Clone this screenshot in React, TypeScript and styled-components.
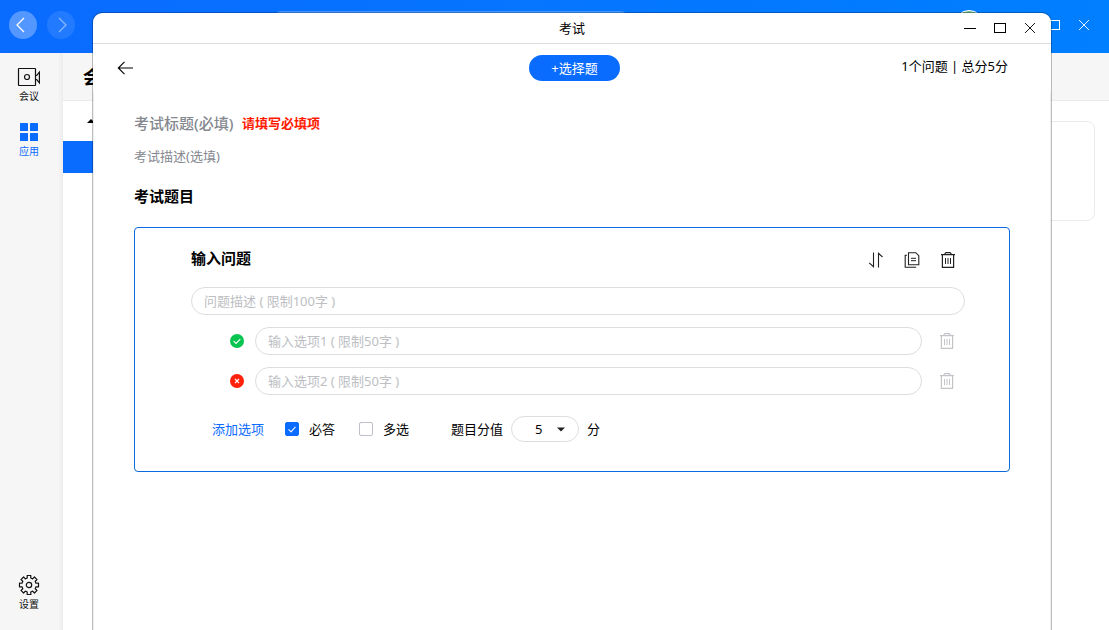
import React, { useState } from 'react';
import styled, { createGlobalStyle } from 'styled-components';

const GlobalStyle = createGlobalStyle`
  *, *::before, *::after { box-sizing: border-box; }
  body {
    margin: 0;
    font: 13px/20px "Noto Sans", "Noto Sans CJK SC", sans-serif;
    color: #000;
    background: #fff;
  }
  button, input, select { font: inherit; color: inherit; margin: 0; }
  button { border: 0; padding: 0; background: none; cursor: pointer; }
  svg { display: block; }
`;

/* ---------- application behind the window ---------- */

const Desktop = styled.div`
  position: relative;
  display: flex;
  flex-direction: column;
  min-height: 100vh;
  overflow: hidden;
`;

const AppBar = styled.header`
  display: flex;
  align-items: center;
  gap: 10px;
  height: 53px;
  padding: 0 15px 3px 9px;
  background: linear-gradient(90deg, #0a6bff, #007fff);
`;

const RoundButton = styled.button<{ $dim?: boolean }>`
  display: grid;
  place-items: center;
  width: 28px;
  height: 28px;
  border-radius: 50%;
  color: #fff;
  background: rgba(255, 255, 255, ${p => (p.$dim ? 0.1 : 0.3)});
  svg { opacity: ${p => (p.$dim ? 0.45 : 1)}; }
`;

const SearchBar = styled.div`
  width: 352px;
  height: 28px;
  margin-left: 190px;
  border-radius: 6px;
  background: rgba(255, 255, 255, 0.25);
`;

const Avatar = styled.div`
  width: 30px;
  height: 30px;
  margin: 0 50px 0 auto;
  border: 1px solid #fff;
  border-radius: 50%;
  background: #68b48c;
`;

const BarButton = styled.button`
  display: grid;
  place-items: center;
  width: 20px;
  height: 28px;
  color: #fff;
`;

const AppBody = styled.div`
  flex: 1;
  display: flex;
`;

const SideBar = styled.nav`
  display: flex;
  flex-direction: column;
  align-items: center;
  gap: 17px;
  width: 63px;
  padding: 13px 5px 18px 0;
  background: linear-gradient(90deg, #f6f6f6 58px, #ececec 63px);
`;

const SideItem = styled.button<{ $active?: boolean; $last?: boolean }>`
  display: flex;
  flex-direction: column;
  align-items: center;
  gap: 1px;
  margin-top: ${p => (p.$last ? 'auto' : '0')};
  font-size: 10px;
  line-height: 15px;
  color: ${p => (p.$active ? '#0a6bff' : '#111')};
`;

const Page = styled.div`
  flex: 1;
  display: flex;
  flex-direction: column;
`;

const PageHead = styled.h1`
  margin: 0;
  height: 48px;
  padding-left: 20px;
  border-bottom: 1px solid #ebebeb;
  background: #f6f6f6;
  font-size: 18px;
  line-height: 48px;
`;

const PageColumns = styled.div`
  flex: 1;
  display: flex;
`;

const Tree = styled.div`
  width: 180px;
`;

const TreeHead = styled.div`
  display: flex;
  align-items: center;
  height: 40px;
  padding-left: 24px;
`;

const TreeSelected = styled.div`
  height: 32px;
  background: #0a6bff;
`;

const PagePanel = styled.div`
  flex: 1;
  height: 100px;
  margin: 20px 14px 0 0;
  border: 1px solid #ebebeb;
  border-radius: 8px;
`;

/* ---------- exam window ---------- */

const Window = styled.section`
  position: absolute;
  inset: 12px 57px 0 92px;
  display: flex;
  flex-direction: column;
  border: 1px solid rgba(0, 0, 0, 0.25);
  border-bottom: 0;
  border-radius: 10px 10px 0 0;
  background: #fff;
  background-clip: padding-box;
  overflow: hidden;
`;

const TitleBar = styled.header`
  display: grid;
  grid-template-columns: 1fr auto 1fr;
  align-items: center;
  height: 31px;
  padding: 0 6px;
  border-bottom: 1px solid #dedede;
`;

const WindowTitle = styled.span`
  grid-column: 2;
`;

const WindowButtons = styled.div`
  display: flex;
  justify-content: flex-end;
`;

const WindowButton = styled.button`
  display: grid;
  place-items: center;
  width: 30px;
  height: 30px;
`;

const ToolBar = styled.div`
  display: grid;
  grid-template-columns: 1fr auto 1fr;
  align-items: center;
  height: 48px;
  padding: 0 19px 0 24px;
`;

const BackButton = styled.button`
  justify-self: start;
`;

const AddButton = styled.button`
  height: 26px;
  padding: 0 22px 1px;
  border-radius: 13px;
  color: #fff;
  background: #0a6bff;
`;

const Summary = styled.span`
  justify-self: end;
  padding: 0 24px 4px 0;
`;

const Form = styled.form`
  flex: 1;
  padding: 20px 40px;
  border: solid #ededed;
  border-width: 0 1px;
`;

const TitleRow = styled.div`
  display: flex;
  align-items: center;
  height: 22px;
  margin-bottom: 12px;
`;

const PlainInput = styled.input<{ $kind: 'title' | 'text' | 'question' }>`
  width: ${p => (p.$kind === 'title' ? '108px' : '300px')};
  height: ${p => (p.$kind === 'text' ? '20px' : '22px')};
  padding: 0;
  border: 0;
  outline: 0;
  display: block;
  background: none;
  font-size: ${p => (p.$kind === 'text' ? '13px' : '15px')};
  font-weight: ${p => ({ title: 500, text: 400, question: 700 })[p.$kind]};
  &::placeholder {
    opacity: 1;
    color: ${p => (p.$kind === 'question' ? '#000' : '#85888f')};
  }
`;

const ErrorText = styled.span`
  font-weight: 700;
  color: #ff1a00;
`;

const SectionTitle = styled.h2`
  margin: 19px 0 20px;
  font-size: 15px;
  line-height: 22px;
`;

const Card = styled.div`
  display: flex;
  flex-direction: column;
  gap: 12px;
  padding: 16px 44px 29px 56px;
  border: 1px solid #0a6bdf;
  border-radius: 4px;
`;

const CardHead = styled.div`
  display: flex;
  align-items: flex-start;
  justify-content: space-between;
  height: 31px;
  padding: 3px 9px 0 0;
`;

const IconRow = styled.div`
  display: flex;
  gap: 20px;
  padding-top: 5px;
`;

const IconButton = styled.button<{ $faint?: boolean }>`
  width: 16px;
  height: 16px;
  color: ${p => (p.$faint ? '#c4c4c8' : '#222')};
`;

const PillInput = styled.input`
  flex: 1;
  width: 100%;
  min-width: 0;
  min-height: 28px;
  padding: 0 12px;
  border: 1px solid #dcdddf;
  border-radius: 14px;
  outline: 0;
  &::placeholder { color: #bcbec2; opacity: 1; }
`;

const OptionRow = styled.div`
  display: flex;
  align-items: center;
  padding: 0 10px 0 39px;
`;

const Mark = styled.button`
  width: 14px;
  height: 14px;
  margin-right: 11px;
`;

const OptionRemove = styled(IconButton)`
  margin-left: 17px;
`;

const CardFoot = styled.div`
  display: flex;
  align-items: center;
  margin-top: 9px;
  padding-left: 21px;
`;

const AddOption = styled.a`
  margin-right: 21px;
  color: #0a6bff;
  text-decoration: none;
`;

const CheckLabel = styled.label`
  display: flex;
  align-items: center;
  gap: 10px;
  margin-right: 24px;
`;

const CheckBox = styled.input.attrs({ type: 'checkbox' })`
  appearance: none;
  display: grid;
  place-items: center;
  width: 14px;
  height: 14px;
  border: 1px solid #bfc0c8;
  border-radius: 2px;
  &:checked { border-color: #0a6bff; background: #0a6bff; }
  &:checked::before {
    content: "";
    width: 4px;
    height: 7px;
    margin-bottom: 2px;
    border: solid #fff;
    border-width: 0 1px 1px 0;
    transform: rotate(42deg);
  }
`;

const ScoreLabel = styled.label`
  margin: 0 8px 0 18px;
`;

const SelectBox = styled.span`
  position: relative;
  margin-right: 8px;
  svg {
    position: absolute;
    top: 11px;
    right: 14px;
    pointer-events: none;
  }
`;

const Select = styled.select`
  appearance: none;
  display: block;
  width: 68px;
  height: 26px;
  padding: 0 22px 0 23px;
  border: 1px solid #dcdddf;
  border-radius: 13px;
  background: #fff;
`;

/* ---------- icons ---------- */

const line = { fill: 'none', stroke: 'currentColor' } as const;

const Chevron = ({ flip }: { flip?: boolean }) => (
  <svg width="16" height="16" viewBox="0 0 16 16" {...line} strokeWidth="1.3">
    <path d={flip ? 'M6 1l7 7-7 7' : 'M9 1L2 8l7 7'} />
  </svg>
);

const VideoIcon = () => (
  <svg width="24" height="22" viewBox="0 0 24 22" {...line} strokeWidth="1.2">
    <rect x="1.5" y="2.5" width="17" height="17" rx="0.5" />
    <circle cx="10" cy="11" r="2.5" />
    <path d="M18.5 9.5h1.2L22.4 6.2v10.6l-2.7-3.3h-1.2" />
  </svg>
);

const AppsIcon = () => (
  <svg width="22" height="22" viewBox="0 0 22 22" fill="currentColor">
    <rect x="2" y="2" width="8" height="8" rx="0.6" />
    <rect x="12" y="2" width="8" height="8" rx="0.6" />
    <rect x="2" y="12" width="8" height="8" rx="0.6" />
    <rect x="12" y="12" width="8" height="8" rx="0.6" />
  </svg>
);

// Outline of an eight-toothed wheel around (11, 11).
const gearPoints = Array.from({ length: 8 }, (_, tooth) =>
  [[7.2, -14], [9.7, -11], [9.7, 11], [7.2, 14]].map(([r, offset]) => {
    const angle = ((tooth * 45 + offset) * Math.PI) / 180;
    return `${(11 + r * Math.sin(angle)).toFixed(2)},${(11 - r * Math.cos(angle)).toFixed(2)}`;
  }).join(' ')
).join(' ');

const GearIcon = () => (
  <svg width="22" height="22" viewBox="0 0 22 22" {...line} strokeWidth="1.2" strokeLinejoin="round">
    <polygon points={gearPoints} />
    <circle cx="11" cy="11" r="2.7" />
  </svg>
);

const MinimizeIcon = () => (
  <svg width="12" height="12" viewBox="0 0 12 12" {...line}><path d="M0 6.5h12" /></svg>
);

const MaximizeIcon = () => (
  <svg width="12" height="12" viewBox="0 0 12 12" {...line}><rect x=".5" y="1.5" width="11" height="9" /></svg>
);

const CloseIcon = () => (
  <svg width="12" height="12" viewBox="0 0 12 12" {...line} strokeWidth="0.9"><path d="M1 1l10 10M11 1L1 11" /></svg>
);

const ArrowLeftIcon = () => (
  <svg width="16" height="16" viewBox="0 0 16 16" {...line} strokeWidth="1.1"><path d="M16 8H1.5M7.5 1.8L1.3 8l6.2 6.2" /></svg>
);

const SortIcon = () => (
  <svg width="16" height="16" viewBox="0 0 16 16" {...line} strokeWidth="1.1">
    <path d="M5.5 .5v14.2L1.2 10.8M10.5 15.5V1.3l4 3.7" />
  </svg>
);

const CopyIcon = () => (
  <svg width="16" height="16" viewBox="0 0 16 16" {...line} strokeWidth="1.1">
    <path d="M4.5 .7h7.3l3 3v9H4.5z" />
    <path d="M3 3.3H1.2v12h11" />
    <path d="M7 6.3h5M7 8.7h5" strokeWidth="1" />
  </svg>
);

const TrashIcon = () => (
  <svg width="16" height="16" viewBox="0 0 16 16" {...line} strokeWidth="1.2">
    <path d="M1 2.6h14M2.4 2.6v12.8h11.2V2.6M5 2.4V1.6l1-1h4l1 1v.8" />
    <path d="M5.5 6v6M8 6v6M10.5 6v6" strokeWidth="1" />
  </svg>
);

const MarkIcon = ({ ok }: { ok: boolean }) => (
  <svg width="14" height="14" viewBox="0 0 14 14">
    <circle cx="7" cy="7" r="7" fill={ok ? '#07c550' : '#ff2109'} />
    <path
      d={ok ? 'M3.7 7.2l2.3 2.2 4.3-4.3' : 'M5 5l4 4M9 5L5 9'}
      fill="none"
      stroke="#fff"
      strokeWidth="1.1"
    />
  </svg>
);

const options = [
  { id: 1, ok: true },
  { id: 2, ok: false },
];

export default function App() {
  const [required, setRequired] = useState(true);
  const [multiple, setMultiple] = useState(false);

  return (
    <Desktop>
      <GlobalStyle />
      <AppBar>
        <RoundButton aria-label="后退"><Chevron /></RoundButton>
        <RoundButton $dim aria-label="前进"><Chevron flip /></RoundButton>
        <SearchBar />
        <Avatar />
        <BarButton aria-label="最大化"><MaximizeIcon /></BarButton>
        <BarButton aria-label="关闭"><CloseIcon /></BarButton>
      </AppBar>
      <AppBody>
        <SideBar>
          <SideItem><VideoIcon />会议</SideItem>
          <SideItem $active><AppsIcon />应用</SideItem>
          <SideItem $last><GearIcon />设置</SideItem>
        </SideBar>
        <Page>
          <PageHead>会</PageHead>
          <PageColumns>
            <Tree>
              <TreeHead>
                <svg width="8" height="4" viewBox="0 0 8 4"><path d="M0 4l4-4 4 4z" /></svg>
              </TreeHead>
              <TreeSelected />
            </Tree>
            <PagePanel />
          </PageColumns>
        </Page>
      </AppBody>

      <Window aria-label="考试">
        <TitleBar>
          <WindowTitle>考试</WindowTitle>
          <WindowButtons>
            <WindowButton aria-label="最小化"><MinimizeIcon /></WindowButton>
            <WindowButton aria-label="最大化"><MaximizeIcon /></WindowButton>
            <WindowButton aria-label="关闭"><CloseIcon /></WindowButton>
          </WindowButtons>
        </TitleBar>
        <ToolBar>
          <BackButton aria-label="返回"><ArrowLeftIcon /></BackButton>
          <AddButton>+选择题</AddButton>
          <Summary>1个问题 | 总分5分</Summary>
        </ToolBar>
        <Form onSubmit={e => e.preventDefault()}>
          <TitleRow>
            <PlainInput $kind="title" aria-label="考试标题" placeholder="考试标题(必填)" />
            <ErrorText>请填写必填项</ErrorText>
          </TitleRow>
          <PlainInput $kind="text" aria-label="考试描述" placeholder="考试描述(选填)" />
          <SectionTitle>考试题目</SectionTitle>
          <Card>
            <CardHead>
              <PlainInput $kind="question" aria-label="问题" placeholder="输入问题" />
              <IconRow>
                <IconButton type="button" aria-label="排序"><SortIcon /></IconButton>
                <IconButton type="button" aria-label="复制"><CopyIcon /></IconButton>
                <IconButton type="button" aria-label="删除"><TrashIcon /></IconButton>
              </IconRow>
            </CardHead>
            <PillInput aria-label="问题描述" placeholder="问题描述 ( 限制100字 )" />
            {options.map(o => (
              <OptionRow key={o.id}>
                <Mark type="button" aria-label={o.ok ? '正确' : '错误'}><MarkIcon ok={o.ok} /></Mark>
                <PillInput aria-label={`选项${o.id}`} placeholder={`输入选项${o.id} ( 限制50字 )`} />
                <OptionRemove $faint type="button" aria-label="删除选项"><TrashIcon /></OptionRemove>
              </OptionRow>
            ))}
            <CardFoot>
              <AddOption href="#add">添加选项</AddOption>
              <CheckLabel>
                <CheckBox checked={required} onChange={e => setRequired(e.target.checked)} />
                必答
              </CheckLabel>
              <CheckLabel>
                <CheckBox checked={multiple} onChange={e => setMultiple(e.target.checked)} />
                多选
              </CheckLabel>
              <ScoreLabel htmlFor="score">题目分值</ScoreLabel>
              <SelectBox>
                <Select id="score" defaultValue="5">
                  {[1, 2, 3, 4, 5].map(n => <option key={n} value={n}>{n}</option>)}
                </Select>
                <svg width="8" height="5" viewBox="0 0 8 5"><path d="M0 .5h8l-4 4z" fill="#222" /></svg>
              </SelectBox>
              <span>分</span>
            </CardFoot>
          </Card>
        </Form>
      </Window>
    </Desktop>
  );
}
